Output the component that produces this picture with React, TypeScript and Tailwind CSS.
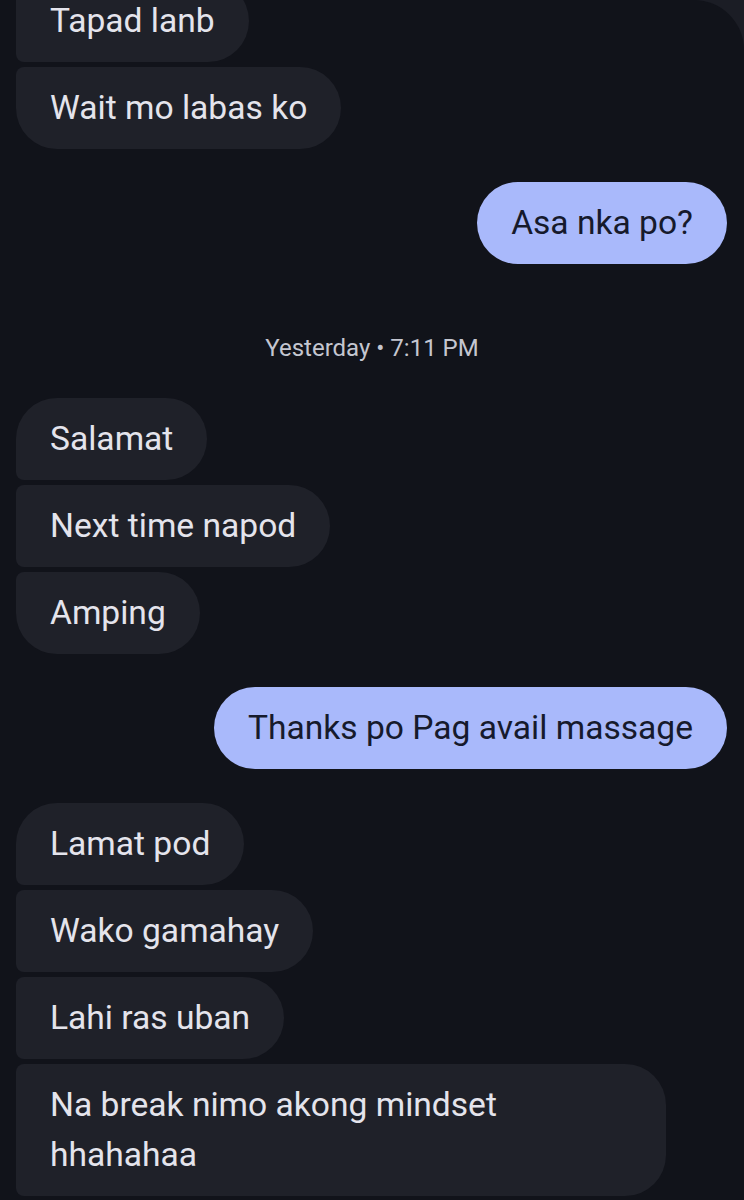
import React from "react";

type Pos = "first" | "middle" | "last" | "single";

function In({ text, pos, multi }: { text: string; pos: Pos; multi?: boolean }) {
  const tl = pos === "first" || pos === "single" ? "rounded-tl-[41px]" : "rounded-tl-[8px]";
  const bl = pos === "last" || pos === "single" ? "rounded-bl-[41px]" : "rounded-bl-[8px]";
  return (
    <div
      className={`self-start bg-[#1f2129] text-[#e4e4ec] rounded-r-[41px] ${tl} ${bl} px-[34px] ${
        multi ? "py-[16px] leading-[50px] max-w-[650px]" : "h-[82px] flex items-center"
      } text-[33.6px]`}
    >
      {text}
    </div>
  );
}

function Out({ text }: { text: string }) {
  return (
    <div className="self-end mr-[17px] bg-[#a9b9fb] text-[#161a2c] rounded-full h-[82px] flex items-center px-[34px] text-[33.6px]">
      {text}
    </div>
  );
}

export default function App() {
  return (
    <div
      className="w-[744px] h-[1200px] overflow-hidden bg-[#1b1d25]"
      style={{ fontFamily: "Roboto, 'Noto Sans', sans-serif" }}
    >
      <div className="h-full bg-[#11131a] rounded-tr-[50px] flex flex-col">
        <div className="flex flex-col gap-[5px] mt-[-20px] pl-[16px]">
          <In text="Tapad lanb" pos="middle" />
          <In text="Wait mo labas ko" pos="last" />
        </div>
        <div className="flex flex-col mt-[33px]">
          <Out text="Asa nka po?" />
        </div>
        <div className="mt-[69px] mb-[35px] h-[30px] flex items-center justify-center text-[24px] text-[#c4c6d0]">
          Yesterday • 7:11 PM
        </div>
        <div className="flex flex-col gap-[5px] pl-[16px]">
          <In text="Salamat" pos="first" />
          <In text="Next time napod" pos="middle" />
          <In text="Amping" pos="last" />
        </div>
        <div className="flex flex-col mt-[33px]">
          <Out text="Thanks po Pag avail massage" />
        </div>
        <div className="flex flex-col gap-[5px] pl-[16px] mt-[34px]">
          <In text="Lamat pod" pos="first" />
          <In text="Wako gamahay" pos="middle" />
          <In text="Lahi ras uban" pos="middle" />
          <In text="Na break nimo akong mindset hhahahaa" pos="middle" multi />
        </div>
      </div>
    </div>
  );
}
